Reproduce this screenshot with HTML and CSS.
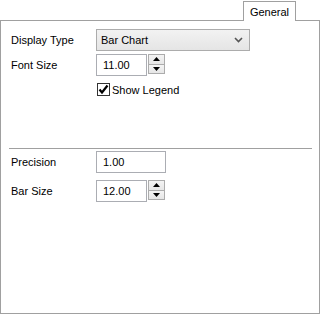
FILE: index.html
```html
<!DOCTYPE html>
<html lang="en">
<head>
    <meta charset="UTF-8">
    <title>Chart Properties</title>
    <link rel="stylesheet" href="styles.css">
</head>
<body>
    <div class="tabs">
        <div class="tab-line lead"></div>
        <div class="tab">General</div>
        <div class="tab-line"></div>
    </div>
    <div class="panel">
        <div class="form">
            <span class="label">Display Type</span>
            <div class="select">
                <span>Bar Chart</span>
                <svg width="9" height="6" viewBox="0 0 9 6"><path d="M1 1 L4.5 4.5 L8 1" fill="none" stroke="#555" stroke-width="1.6"/></svg>
            </div>
            <span class="label">Font Size</span>
            <div class="spin">
                <div class="field">11.00</div>
                <div class="buttons">
                    <div class="btn"><svg width="7" height="4" viewBox="0 0 7 4"><path d="M0 4 L3.5 0 L7 4 Z" fill="#000"/></svg></div>
                    <div class="btn"><svg width="7" height="4" viewBox="0 0 7 4"><path d="M0 0 L3.5 4 L7 0 Z" fill="#000"/></svg></div>
                </div>
            </div>
            <span></span>
            <label class="check">
                <span class="box"><svg width="11" height="11" viewBox="0 0 11 11"><path d="M1.5 5.5 L4 8.5 L9.5 1.5" fill="none" stroke="#000" stroke-width="2.2"/></svg></span>
                Show Legend
            </label>
        </div>
        <div class="separator"></div>
        <div class="form lower">
            <span class="label">Precision</span>
            <div class="field wide">1.00</div>
            <span class="label">Bar Size</span>
            <div class="spin">
                <div class="field">12.00</div>
                <div class="buttons">
                    <div class="btn"><svg width="7" height="4" viewBox="0 0 7 4"><path d="M0 4 L3.5 0 L7 4 Z" fill="#000"/></svg></div>
                    <div class="btn"><svg width="7" height="4" viewBox="0 0 7 4"><path d="M0 0 L3.5 4 L7 0 Z" fill="#000"/></svg></div>
                </div>
            </div>
        </div>
    </div>
</body>
</html>
```
FILE: styles.css
```css
body {
    margin: 0;
    font-family: "Liberation Sans", Arial, sans-serif;
    font-size: 11px;
    color: #000;
    background-color: #fff;
}
.tabs {
    display: flex;
    height: 21px;
}
.tab-line {
    flex: 1;
    border-bottom: 1px solid #a0a0a0;
}
.tab-line.lead {
    flex: 0 0 243px;
}
.tab {
    width: 51px;
    margin-top: 1px;
    border: 1px solid #a0a0a0;
    border-bottom: none;
    text-align: center;
    line-height: 20px;
}
.panel {
    height: 292px;
    border: 1px solid #a0a0a0;
    border-top: none;
}
.form {
    display: grid;
    grid-template-columns: 85px auto;
    justify-content: start;
    align-items: center;
    row-gap: 3px;
    padding: 8px 0 0 10px;
}
.form.lower {
    padding-top: 2px;
    row-gap: 7px;
}
.select {
    width: 142px;
    height: 20px;
    padding: 0 6px 0 4px;
    border: 1px solid #acacac;
    background: linear-gradient(#f2f2f2, #e5e5e5);
    display: flex;
    align-items: center;
    justify-content: space-between;
}
.spin {
    display: flex;
    gap: 1px;
}
.field {
    width: 43px;
    height: 20px;
    padding-left: 6px;
    border: 1px solid #abadb3;
    line-height: 20px;
    background-color: #fff;
}
.field.wide {
    width: 62px;
}
.buttons {
    display: flex;
    flex-direction: column;
    width: 17px;
    height: 20px;
}
.btn {
    height: 9px;
    border: 1px solid #acacac;
    background: linear-gradient(#f4f4f4, #e6e6e6);
    display: flex;
    align-items: center;
    justify-content: center;
}
.btn + .btn {
    height: 9px;
    border-top: none;
}
.check {
    display: flex;
    align-items: center;
    gap: 2px;
    margin-top: 4px;
    margin-left: 1px;
}
.box {
    width: 11px;
    height: 11px;
    border: 1px solid #333;
    display: flex;
    align-items: center;
    justify-content: center;
    background-color: #fff;
}
.separator {
    margin: 52px 7px 0 8px;
    border-top: 1px solid #a0a0a0;
}
```
